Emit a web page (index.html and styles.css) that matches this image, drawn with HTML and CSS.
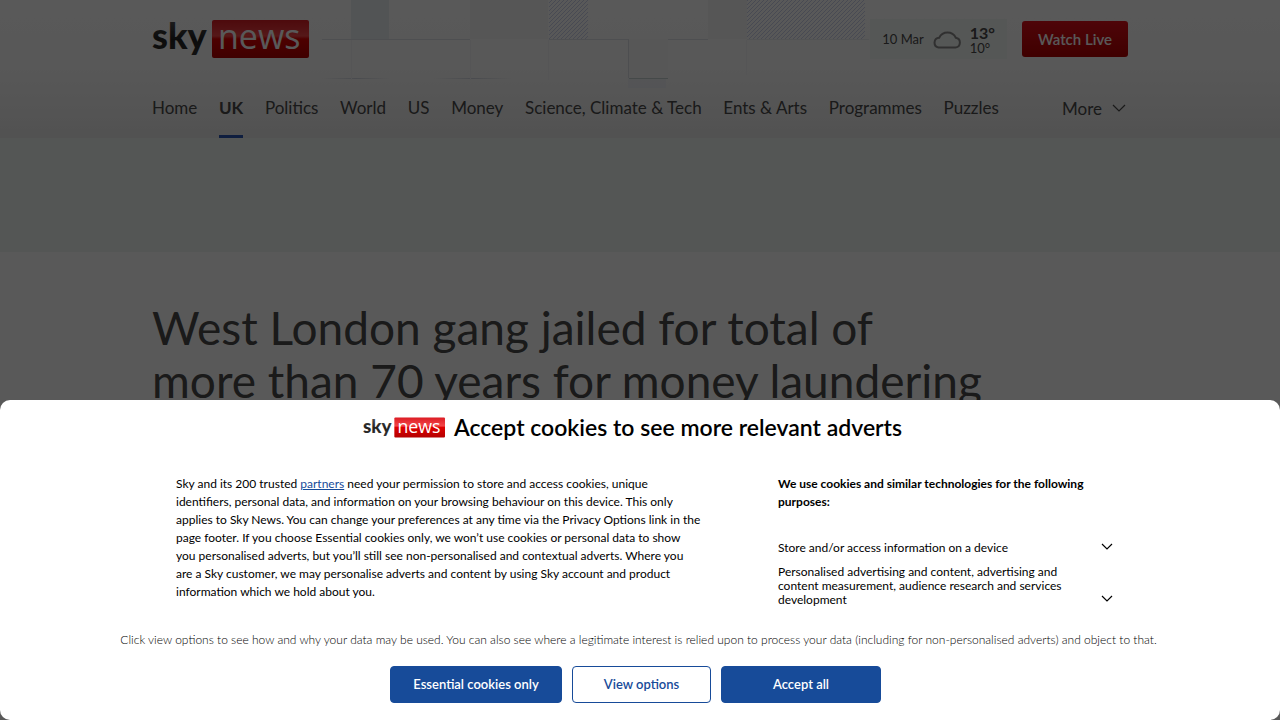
FILE: index.html
```html
<!DOCTYPE html>
<html lang="en">
<head>
    <meta charset="UTF-8">
    <meta name="viewport" content="width=device-width, initial-scale=1.0">
    <title>West London gang jailed for total of more than 70 years for money laundering | UK News | Sky News</title>
    <link rel="stylesheet" href="styles.css">
</head>
<body>

    <header class="site-header">
        <svg class="header-pattern" width="560" height="100" viewBox="0 0 560 100" aria-hidden="true">
            <defs>
                <pattern id="hatch" width="4" height="4" patternUnits="userSpaceOnUse">
                    <path d="M-1 1L1 -1M0 4L4 0M3 5L5 3" stroke="#cdd5ee" stroke-width="1"/>
                </pattern>
                <linearGradient id="fadeLine">
                    <stop offset="0" stop-color="#d3d7e0" stop-opacity="0"/>
                    <stop offset=".5" stop-color="#d3d7e0"/>
                    <stop offset="1" stop-color="#d3d7e0" stop-opacity="0"/>
                </linearGradient>
                <linearGradient id="softBlue" x2="0" y2="1">
                    <stop offset="0" stop-color="#f0f2f7" stop-opacity="0"/>
                    <stop offset="1" stop-color="#eef0f5"/>
                </linearGradient>
            </defs>
            <rect x="31" width="38" height="39" fill="#eceff4"/>
            <rect x="150" width="78" height="39" fill="#f6f6f6"/>
            <rect x="229" width="39" height="39" fill="url(#hatch)"/>
            <rect x="388" width="39" height="39" fill="#f6f6f6"/>
            <rect x="427" width="118" height="39" fill="url(#hatch)"/>
            <rect x="2" y="39" width="148" height="1" fill="#dfe1e7"/>
            <rect x="229" y="39" width="159" height="1" fill="#dfe1e7"/>
            <rect x="427" y="39" width="122" height="1" fill="#eceef1"/>
            <rect x="2" y="78" width="68" height="1" fill="url(#fadeLine)"/>
            <rect x="114" y="78" width="78" height="1" fill="url(#fadeLine)"/>
            <path d="M31.500 40v40M150.500 40v40M228.500 40v40M426.500 40v35" stroke="#f4f4f6"/>
            <path d="M308 42v46h38v-10z" fill="url(#softBlue)"/>
            <rect x="309" y="39" width="39" height="39" fill="#fafafa"/>
            <path d="M308.500 39v39" stroke="#dde0e6"/>
            <path d="M309 78.500h39" stroke="#c6d0d0"/>
        </svg>

        <div class="wrap header-top">
            <a class="logo-link" href="#" aria-label="Sky News">
                <svg class="logo" viewBox="0 0 157 38" role="img" aria-label="Sky News">
                    <defs>
                        <linearGradient id="skyInk" x2="0" y2="1">
                            <stop offset="0" stop-color="#666"/>
                            <stop offset=".6" stop-color="#222"/>
                            <stop offset="1" stop-color="#333"/>
                        </linearGradient>
                        <linearGradient id="newsRed" x2="0" y2="1">
                            <stop offset="0" stop-color="#dc1c24"/>
                            <stop offset=".42" stop-color="#f34648"/>
                            <stop offset=".5" stop-color="#d00"/>
                            <stop offset="1" stop-color="#b40000"/>
                        </linearGradient>
                    </defs>
                    <text class="logo-sky" x="0" y="29" fill="url(#skyInk)">sky</text>
                    <rect x="60" width="97" height="38" rx="2" fill="url(#newsRed)"/>
                    <text class="logo-news" x="66" y="29" fill="#fff">news</text>
                </svg>
            </a>
            <div class="header-tools">
                <a class="weather" href="#">
                    <span>10 Mar</span>
                    <svg width="28" height="20" viewBox="0 0 28 20" aria-hidden="true">
                        <path d="M5.500 18.500H22.500A4.900 4.900 0 0 0 22.800 8.800A9.200 9.200 0 0 0 6.200 8.800A4.900 4.900 0 0 0 5.500 18.500Z" fill="none" stroke="#8a8a8a" stroke-width="2"/>
                    </svg>
                    <span class="temps"><strong>13°</strong><span>10°</span></span>
                </a>
                <a class="watch-live" href="#">Watch Live</a>
            </div>
        </div>

        <nav class="wrap main-nav">
            <ul>
                <li><a href="#">Home</a></li>
                <li><a class="active" href="#">UK</a></li>
                <li><a href="#">Politics</a></li>
                <li><a href="#">World</a></li>
                <li><a href="#">US</a></li>
                <li><a href="#">Money</a></li>
                <li><a href="#">Science, Climate &amp; Tech</a></li>
                <li><a href="#">Ents &amp; Arts</a></li>
                <li><a href="#">Programmes</a></li>
                <li><a href="#">Puzzles</a></li>
            </ul>
            <button class="more" type="button">More
                <svg width="14" height="8" viewBox="0 0 14 8" aria-hidden="true"><path d="M1 1l6 6 6-6" fill="none" stroke="#4a4a4a" stroke-width="1.200"/></svg>
            </button>
        </nav>
    </header>

    <div class="ad-slot"></div>

    <main class="wrap">
        <h1>West London gang jailed for total of<br>more than 70 years for money laundering</h1>
    </main>

    <div class="overlay">
        <section class="consent" role="dialog" aria-modal="true" aria-labelledby="consentTitle">
            <div class="consent-head">
                <svg class="logo" viewBox="0 0 157 38" role="img" aria-label="Sky News">
                    <text class="logo-sky" x="0" y="29" fill="url(#skyInk)">sky</text>
                    <rect x="60" width="97" height="38" rx="2" fill="url(#newsRed)"/>
                    <text class="logo-news" x="66" y="29" fill="#fff">news</text>
                </svg>
                <h2 id="consentTitle">Accept cookies to see more relevant adverts</h2>
            </div>

            <div class="consent-body">
                <p class="consent-text">
                    Sky and its 200 trusted <a href="#">partners</a> need your permission to store and access cookies, unique<br>
                    identifiers, personal data, and information on your browsing behaviour on this device. This only<br>
                    applies to Sky News. You can change your preferences at any time via the Privacy Options link in the<br>
                    page footer. If you choose Essential cookies only, we won’t use cookies or personal data to show<br>
                    you personalised adverts, but you’ll still see non-personalised and contextual adverts. Where you<br>
                    are a Sky customer, we may personalise adverts and content by using Sky account and product<br>
                    information which we hold about you.
                </p>
                <div class="purposes">
                    <h3>We use cookies and similar technologies for the following<br>purposes:</h3>
                    <button class="purpose" type="button">
                        <span>Store and/or access information on a device</span>
                        <svg width="12" height="8" viewBox="0 0 12 8" aria-hidden="true"><path d="M1 1l5 5 5-5" fill="none" stroke="#000" stroke-width="1.200"/></svg>
                    </button>
                    <button class="purpose" type="button">
                        <span>Personalised advertising and content, advertising and<br>content measurement, audience research and services<br>development</span>
                        <svg width="12" height="8" viewBox="0 0 12 8" aria-hidden="true"><path d="M1 1l5 5 5-5" fill="none" stroke="#000" stroke-width="1.200"/></svg>
                    </button>
                </div>
            </div>

            <p class="consent-note">Click view options to see how and why your data may be used. You can also see where a legitimate interest is relied upon to process your data (including for non-personalised adverts) and object to that.</p>

            <div class="consent-actions">
                <button class="btn btn-essential" type="button">Essential cookies only</button>
                <button class="btn btn-outline" type="button">View options</button>
                <button class="btn btn-accept" type="button">Accept all</button>
            </div>
        </section>
    </div>

</body>
</html>
```
FILE: styles.css
```css
* {
    box-sizing: border-box;
}

body {
    margin: 0;
    height: 100vh;
    overflow: hidden;
    background: #fff;
    color: #4a4a4a;
    font-family: Lato, "Open Sans", sans-serif;
    font-weight: 400;
}

a {
    color: inherit;
    text-decoration: none;
}

button {
    font-family: inherit;
    cursor: pointer;
}

.wrap {
    max-width: 976px;
    margin: 0 auto;
}

/* Header */
.site-header {
    position: relative;
    background: linear-gradient(#fff, #fbfbfb 50%, #eaeaea);
}

.header-pattern {
    position: absolute;
    top: 0;
    left: calc(50% - 320px);
    width: 560px;
}

.header-top {
    position: relative;
    display: flex;
    justify-content: space-between;
    align-items: center;
    height: 78px;
}

.logo {
    display: block;
    width: 157px;
    height: 38px;
    flex: none;
    overflow: visible;
}

.logo-sky {
    font-family: Lato, sans-serif;
    font-weight: 900;
    font-size: 36px;
}

.logo-news {
    font-family: "Open Sans", sans-serif;
    font-weight: 400;
    font-size: 34px;
}

.header-tools {
    display: flex;
    align-items: center;
    gap: 15px;
}

.weather {
    display: flex;
    align-items: center;
    gap: 9px;
    height: 40px;
    padding: 0 12px;
    background: #f4f8f6;
    font-size: 13px;
    line-height: 14px;
}

.temps {
    display: flex;
    flex-direction: column;
}

.temps strong {
    font-size: 16px;
    font-weight: 700;
    line-height: 17px;
}

.watch-live {
    width: 106px;
    height: 36px;
    border-radius: 3px;
    background: linear-gradient(#e0101a, #b40000);
    color: #fff;
    font-size: 15px;
    font-weight: 600;
    line-height: 36px;
    text-align: center;
}

.main-nav {
    display: flex;
    justify-content: space-between;
    height: 60px;
    font-size: 17px;
    line-height: 60px;
}

.main-nav ul {
    display: flex;
    justify-content: space-between;
    width: 847px;
    margin: 0;
    padding: 0;
    list-style: none;
}

.main-nav a {
    display: block;
    height: 60px;
}

.main-nav a.active {
    border-bottom: 3px solid #2c56b4;
    font-weight: 700;
}

.more {
    display: flex;
    align-items: center;
    gap: 10px;
    padding: 0 2px;
    border: 0;
    background: none;
    color: inherit;
    font-size: 17px;
}

.ad-slot {
    height: 114px;
    background: #f0f5f3;
}

h1 {
    margin: 49px 0 0;
    font-size: 46px;
    font-weight: 400;
    line-height: 53px;
    white-space: nowrap;
}

/* Cookie consent */
.overlay {
    position: fixed;
    inset: 0;
    display: flex;
    align-items: flex-end;
    background: rgba(0, 0, 0, 0.65);
}

.consent {
    width: 100%;
    padding: 14px 0 17px;
    border-radius: 10px;
    background: #fff;
    color: #000;
}

.consent-head {
    display: flex;
    justify-content: center;
    align-items: center;
    gap: 9px;
    padding-right: 15px;
}

.consent-head .logo {
    width: 82px;
    height: 21px;
}

.consent-head h2 {
    margin: 0;
    font-size: 23px;
    font-weight: 600;
    line-height: 27px;
}

.consent-body {
    display: flex;
    justify-content: center;
    gap: 66px;
    padding: 34px 0 0 9px;
    font-size: 12px;
    line-height: 18px;
}

.consent-text {
    width: 536px;
    margin: 0;
    white-space: nowrap;
}

.consent-text a {
    color: #174b99;
    text-decoration: underline;
}

.purposes {
    width: 335px;
}

.purposes h3 {
    margin: 0 0 30px;
    font-size: 12px;
    font-weight: 700;
    line-height: 18px;
    white-space: nowrap;
}

.purpose {
    display: flex;
    justify-content: space-between;
    align-items: flex-end;
    width: 100%;
    margin-bottom: 10px;
    padding: 0;
    border: 0;
    background: none;
    color: #000;
    font-size: 12px;
    line-height: 14px;
    text-align: left;
    white-space: nowrap;
}

.purpose svg {
    flex: none;
    margin-bottom: 4px;
}

.consent-note {
    margin: 13px 3px 16px 0;
    font-size: 12px;
    font-weight: 300;
    line-height: 20px;
    text-align: center;
}

.consent-actions {
    display: flex;
    justify-content: center;
    gap: 10px;
    padding-right: 9px;
}

.btn {
    height: 37px;
    padding: 0 0 2px;
    border: 1px solid #174b99;
    border-radius: 4px;
    background: #174b99;
    color: #fff;
    font-size: 13px;
    font-weight: 600;
}

.btn-essential {
    width: 172px;
}

.btn-outline {
    width: 139px;
    background: #fff;
    color: #174b99;
}

.btn-accept {
    width: 160px;
}
```
